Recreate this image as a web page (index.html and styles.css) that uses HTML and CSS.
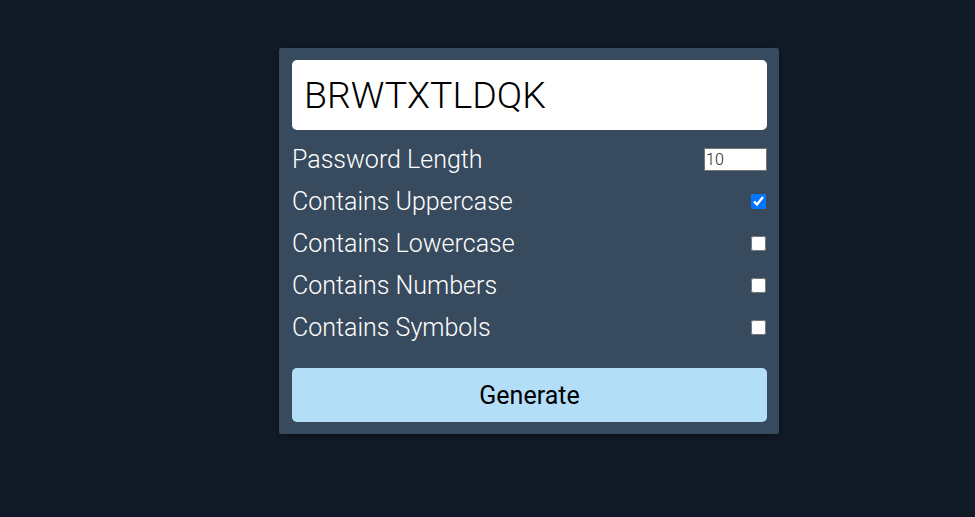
FILE: index.html
```html
<!DOCTYPE html>
<html>
<head>
<meta charset="utf-8">
<link rel="stylesheet" href="styles.css">
</head>
<body>
<div class="card">
  <div class="result">BRWTXTLDQK</div>
  <div class="settings">
    <div class="setting">
      <label>Password Length</label>
      <input type="number" class="num" value="10">
    </div>
    <div class="setting">
      <label>Contains Uppercase</label>
      <input type="checkbox" class="chk" checked>
    </div>
    <div class="setting">
      <label>Contains Lowercase</label>
      <input type="checkbox" class="chk">
    </div>
    <div class="setting">
      <label>Contains Numbers</label>
      <input type="checkbox" class="chk">
    </div>
    <div class="setting">
      <label>Contains Symbols</label>
      <input type="checkbox" class="chk">
    </div>
  </div>
  <button class="btn">Generate</button>
</div>
</body>
</html>
```
FILE: styles.css
```css
* { box-sizing: border-box; }
html, body { margin: 0; padding: 0; }
body {
  background: #111a27;
  font-family: Roboto, "Open Sans", sans-serif;
  color: #fff;
  height: 517px;
  padding: 48px 0 0 279px;
}
.card {
  width: 500px;
  background: #374a5e;
  padding: 12px 12px 12px 13px;
  box-shadow: 0 2px 10px rgba(0,0,0,0.35);
  border-radius: 2px;
}
.result {
  background: #fff;
  color: #000;
  height: 70px;
  border-radius: 5px;
  font-size: 37.5px;
  font-weight: 300;
  display: flex;
  align-items: center;
  padding-left: 12px;
}
.settings { margin-top: 8px; }
.setting {
  height: 42px;
  display: flex;
  align-items: center;
  justify-content: space-between;
  font-size: 25px;
  font-weight: 300;
}
.setting label { line-height: 1; }
.num {
  width: 63px;
  height: 23px;
  font-size: 16px;
  font-weight: 300;
  font-family: Roboto, sans-serif;
  padding: 0 1px;
  margin: 0 0 0 0;
  border: 1px solid #767676;
  color: #222;
}
.chk {
  width: 15px;
  height: 15px;
  margin: 0 1px 0 0;
}
.btn {
  display: block;
  width: 475px;
  height: 54px;
  margin-top: 20px;
  background: #b3def8;
  border: none;
  border-radius: 5px;
  font-family: Roboto, sans-serif;
  font-size: 25px;
  color: #000;
}
```
